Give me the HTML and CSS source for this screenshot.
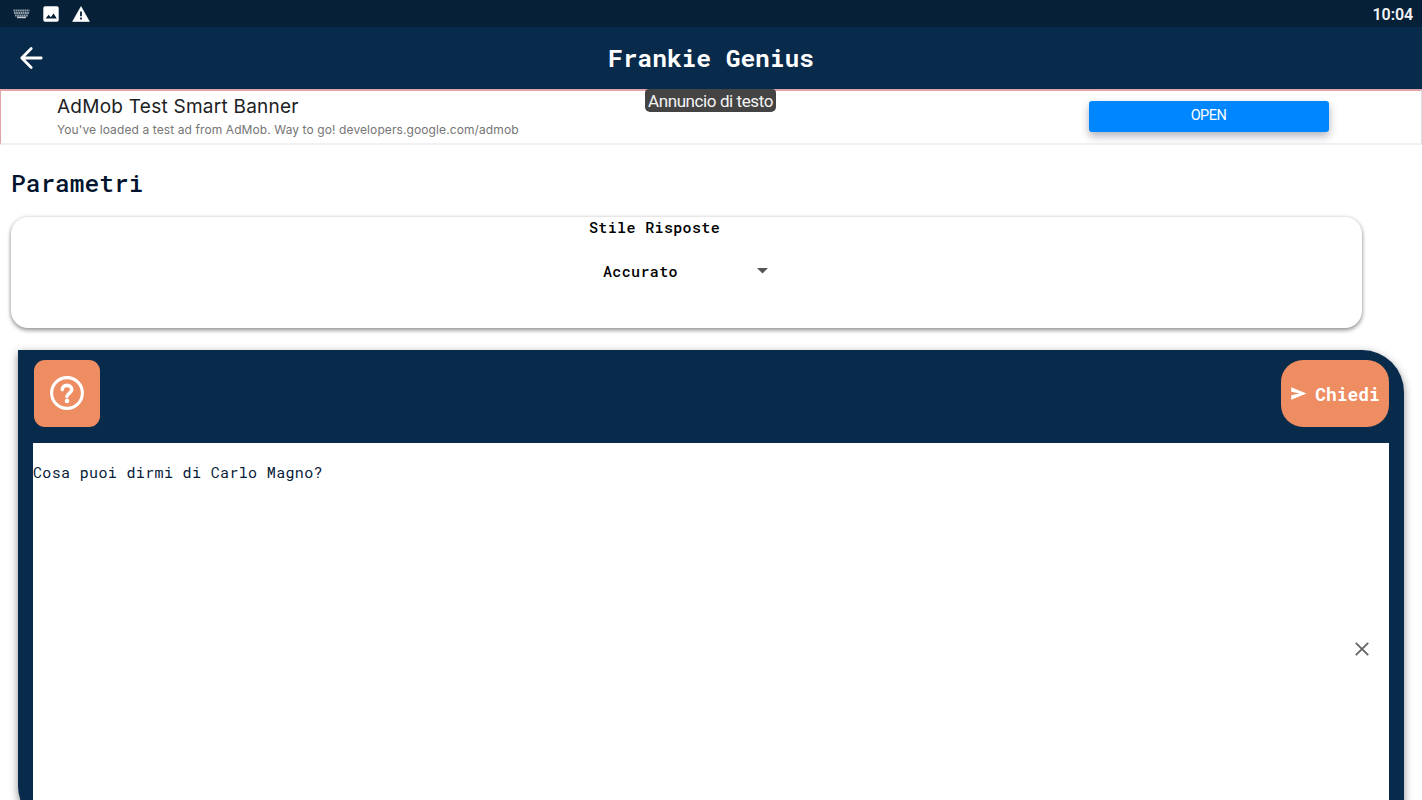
FILE: index.html
```html
<!DOCTYPE html>
<html lang="it">
<head>
<meta charset="utf-8">
<title>Frankie Genius</title>
<link rel="stylesheet" href="styles.css">
</head>
<body>
<div class="status-bar">
  <div class="status-icons">
    <svg class="icon-keyboard" width="17" height="10" viewBox="0 0 17 10"><path d="M.5 1.5h16M1 4h15M2 6.5h13" stroke="#93a0aa" stroke-width="2" stroke-dasharray="1.7 .5" fill="none"/><path d="M4 8.4h9" stroke="#c4ccd1" stroke-width="1.6"/></svg>
    <svg class="icon-image" width="16" height="16" viewBox="0 0 16 16"><rect x=".3" y=".3" width="15.4" height="15.4" rx="1.8" fill="#fff"/><path d="M2.6 12.6l3-3.9 2.1 2.5 2.9-3.8 3.2 5.2z" fill="#062038"/></svg>
    <svg class="icon-warning" width="18" height="16" viewBox="0 0 18 16"><path d="M9 .6L17.4 15.5H.6z" fill="#fff" stroke="#fff" stroke-width=".6" stroke-linejoin="round"/><path d="M8.1 5.6h1.8v4.6H8.1zM8.1 11.6h1.8v1.9H8.1z" fill="#062038"/></svg>
  </div>
  <span class="clock">10:04</span>
</div>
<header class="app-bar">
  <svg class="back" width="24" height="24" viewBox="0 0 24 24" fill="none" stroke="#fff" stroke-width="2.8" stroke-linecap="round" stroke-linejoin="round"><path d="M22.2 12H2.8M12.2 2.6L2.8 12l9.4 9.4"/></svg>
  <h1 class="title">Frankie Genius</h1>
</header>
<section class="ad">
  <div class="ad-copy">
    <div class="ad-title">AdMob Test Smart Banner</div>
    <div class="ad-text">You've loaded a test ad from AdMob. Way to go! developers.google.com/admob</div>
  </div>
  <span class="ad-label">Annuncio di testo</span>
  <button class="ad-open">OPEN</button>
</section>
<main class="content">
  <h2 class="heading">Parametri</h2>
  <section class="card">
    <div class="field-label">Stile Risposte</div>
    <div class="select"><span>Accurato</span><svg class="caret" width="11" height="6" viewBox="0 0 11 6"><path d="M0 0h11L5.5 5.6z" fill="#555"/></svg></div>
  </section>
  <section class="panel">
    <div class="toolbar">
      <button class="help"><svg width="34" height="34" viewBox="0 0 34 34" fill="none" stroke="#fff"><circle cx="17" cy="17" r="15.4" stroke-width="3.1"/><path d="M12.3 13.6c0-2.7 2-4.2 4.6-4.2 2.9 0 4.8 1.7 4.8 4.1 0 1.8-1.1 2.8-2.5 3.9-1.3 1-2.3 1.9-2.3 3.2" stroke-width="3.6" stroke-linecap="round"/><circle cx="17" cy="25" r="2.3" fill="#fff" stroke="none"/></svg></button>
      <button class="ask"><svg width="16" height="13" viewBox="0 0 16 13"><path d="M.2.2L15.6 6.4.2 12.8V8.2L8.5 6.4.2 4.8z" fill="#fff"/></svg><span>Chiedi</span></button>
    </div>
    <div class="prompt">
      <p class="question">Cosa puoi dirmi di Carlo Magno?</p>
      <svg class="clear" width="14" height="14" viewBox="0 0 14 14"><path d="M.8.8l12.4 12.4M13.2.8L.8 13.2" stroke="#666" stroke-width="1.9" fill="none"/></svg>
    </div>
  </section>
</main>
</body>
</html>
```
FILE: styles.css
```css
* { box-sizing: border-box; }
body {
  margin: 0;
  height: 800px;
  overflow: hidden;
  display: flex;
  flex-direction: column;
  background: #fff;
  font-family: "Roboto Mono", "DejaVu Sans Mono", monospace;
}
button { border: 0; padding: 0; color: #fff; font-family: inherit; }
svg { display: block; flex: none; }
.status-bar {
  height: 27px;
  flex: none;
  display: flex;
  align-items: center;
  justify-content: space-between;
  padding: 0 9px 0 13px;
  background: #062038;
}
.status-icons { display: flex; align-items: center; gap: 13px; }
.clock { font: 600 16px/27px Roboto, sans-serif; letter-spacing: -.1px; color: #f2f4f6; padding-top: 1px; }
.app-bar {
  height: 62px;
  flex: none;
  display: grid;
  grid-template-columns: 1fr auto 1fr;
  align-items: center;
  padding: 0 19px;
  background: #092b4b;
}
.title {
  margin: 0;
  color: #fff;
  font-size: 24.5px;
  font-weight: 700;
  line-height: 32px;
}
.ad {
  height: 56px;
  flex: none;
  display: grid;
  grid-template-columns: 588px 1fr 240px;
  align-items: start;
  padding: 0 93px 0 56px;
  border-top: 2px solid #e0a4a9;
  border-left: 1px solid #e0a4a9;
  border-right: 1px solid #ddd;
  border-bottom: 2px solid #f1f1f1;
}
.ad-copy { font-family: Inter, sans-serif; white-space: nowrap; padding-top: 3px; }
.ad-title { font-size: 19px; line-height: 26px; letter-spacing: .25px; color: #202124; }
.ad-text { font-size: 12px; line-height: 20px; letter-spacing: .1px; color: #757575; }
.ad-label {
  justify-self: start;
  margin-top: -2px;
  padding: 0 3px;
  height: 23px;
  border-radius: 4px 4px 5px 5px;
  background: #444;
  color: #f5f5f5;
  font: 17px/24px Roboto, sans-serif;
  letter-spacing: -.41px;
  white-space: nowrap;
}
.ad-open {
  height: 31px;
  margin: 10px -.5px 0 .5px;
  padding-bottom: 2px;
  border-radius: 3px;
  background: #0087ff;
  box-shadow: 0 4px 9px rgba(40, 40, 70, .36);
  font: 14.5px/29px Roboto, sans-serif;
  letter-spacing: -.5px;
}
.content { flex: 1; min-height: 0; display: flex; flex-direction: column; }
.heading {
  margin: 21px 0 0 11px;
  color: #03142e;
  font-size: 24.5px;
  font-weight: 500;
  line-height: 34px;
}
.card {
  flex: none;
  width: 1351px;
  height: 111px;
  margin: 17px 0 0 11px;
  padding: 0 0 0 578px;
  border-radius: 17px;
  background: #fff;
  box-shadow: 0 1px 4px rgba(0, 0, 0, .34), 0 3px 4px rgba(0, 0, 0, .2);
  font-size: 15px;
  letter-spacing: .36px;
  font-weight: 500;
  color: #000;
}
.field-label { line-height: 20px; }
.select {
  display: flex;
  align-items: center;
  justify-content: space-between;
  width: 179px;
  margin-top: 22px;
  padding-left: 14px;
  line-height: 24px;
}
.caret { margin-bottom: 1px; }
.panel {
  flex: none;
  width: 1386px;
  height: 478px;
  margin: 22px 0 0 18px;
  padding: 10px 15px 0;
  border-radius: 0 42px 0 42px;
  background: #092b4b;
  box-shadow: 0 3px 8px rgba(0, 0, 0, .45);
}
.toolbar { display: flex; justify-content: space-between; height: 67px; padding-left: 1px; }
.help, .ask { display: flex; align-items: center; justify-content: center; background: #ee8c62; height: 67px; }
.help { width: 66px; border-radius: 11px; }
.ask { width: 108px; border-radius: 22px; gap: 8px; padding-left: 1px; font-size: 17.9px; font-weight: 700; }
.help svg { margin-bottom: 1px; }
.prompt {
  display: flex;
  align-items: flex-start;
  justify-content: space-between;
  height: 397px;
  margin-top: 16px;
  padding-right: 20px;
  background: #fff;
}
.question { margin: 17px 0 0; font-size: 15px; letter-spacing: .35px; line-height: 24px; color: #071c39; }
.clear { margin-top: 199px; }
```
